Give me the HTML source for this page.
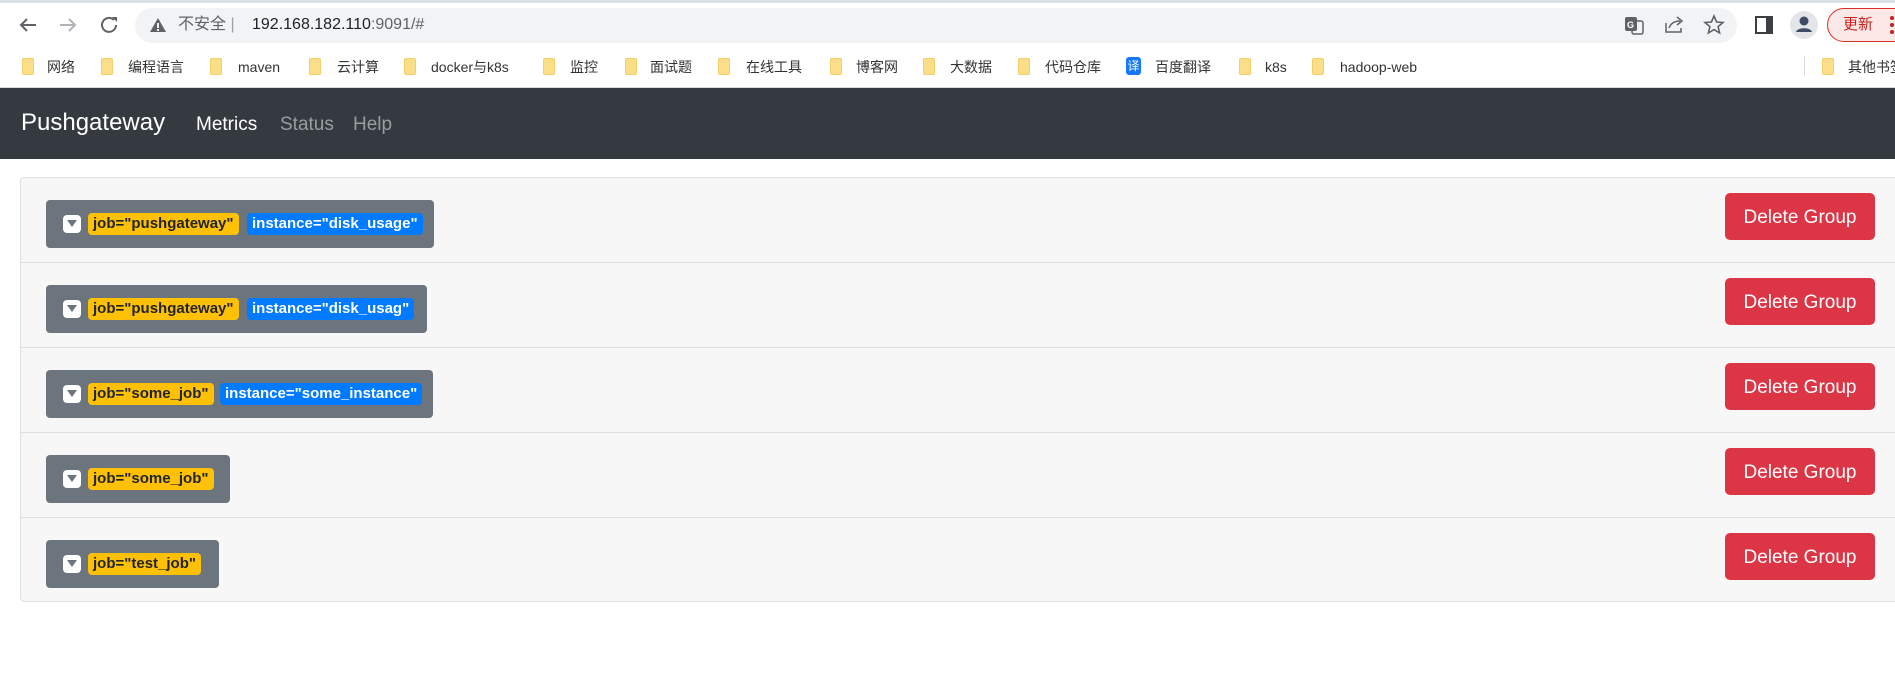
<!DOCTYPE html>
<html><head><meta charset="utf-8"><style>
*{margin:0;padding:0;box-sizing:border-box}
body{width:1895px;height:691px;overflow:hidden;background:#fff;font-family:"Liberation Sans","Noto Sans CJK SC",sans-serif;position:relative}
.abs{position:absolute}
.top{left:0;top:0;width:1895px;height:3px;background:#dee1e6}
.addr{left:135px;top:8px;width:1602px;height:35px;border-radius:18px;background:#f1f3f4}
.bm{position:absolute;top:58px;font-size:14px;color:#333;line-height:18px;white-space:nowrap}
.fd{position:absolute;top:58px;width:12px;height:17px;background:#fbdf88;border:1px solid #f2cf6a;border-radius:2px}
.nav{left:0;top:88px;width:1895px;height:71px;background:#343a40}
.card{left:20px;top:177px;width:1890px;height:425px;background:#f7f7f7;border:1px solid #dfdfdf;border-radius:4px}
.row{position:absolute;left:0;width:100%;height:85px;border-bottom:1px solid #dfdfdf}
.grp{position:absolute;left:25px;top:22px;height:48px;background:#6c757d;border-radius:4px}
.ic{position:absolute;left:17px;top:15px;width:18px;height:18px;background:#fff;border-radius:4px}
.ic:after{content:"";position:absolute;left:4px;top:5px;border-left:5px solid transparent;border-right:5px solid transparent;border-top:7px solid #6c757d}
.b{position:absolute;top:13px;height:22px;line-height:22px;border-radius:4px;padding:0 5px;font-weight:bold;font-size:15px;white-space:nowrap}
.y{background:#ffc107;color:#212529}
.bl{background:#007bff;color:#fff}
.del{position:absolute;left:1704px;top:15px;width:150px;height:47px;background:#dc3545;color:#fff;border-radius:5px;font-size:19px;line-height:50px;text-align:center}
</style></head><body>
<div class="abs top"></div>
<svg class="abs" style="left:17px;top:14px" width="110" height="22" viewBox="0 0 110 22">
<path d="M19 11H4M10 5l-6 6 6 6" stroke="#5f6368" stroke-width="2" fill="none"/>
<path d="M43 11h15M52 5l6 6-6 6" stroke="#b0b3b7" stroke-width="2" fill="none"/>
<path d="M97 6a7 7 0 1 0 2 5" stroke="#5f6368" stroke-width="2" fill="none"/><path d="M95 3h5v5z" fill="#5f6368"/>
</svg>
<div class="abs addr"></div>
<svg class="abs" style="left:150px;top:18px" width="16" height="14"><path d="M8 0L16 14H0z" fill="#5f6368"/><rect x="7" y="5" width="2" height="5" fill="#f1f3f4"/><rect x="7" y="11" width="2" height="2" fill="#f1f3f4"/></svg>
<div class="abs" style="left:178px;top:14px;font-size:16px;color:#5f6368;line-height:22px">不安全 <span style="color:#9aa0a6">|</span></div>
<div class="abs" style="left:252px;top:14px;font-size:16px;color:#202124;line-height:22px">192.168.182.110<span style="color:#5f6368">:9091/#</span></div>
<svg class="abs" style="left:1625px;top:14px" width="110" height="22">
<rect x="0" y="3" width="12" height="14" rx="2" fill="#5f6368"/><rect x="7" y="7" width="11" height="13" rx="2" fill="none" stroke="#5f6368" stroke-width="1.5"/><text x="2" y="14" font-size="9" fill="#fff" font-family="Liberation Sans" font-weight="bold">G</text>
<path d="M41 9v9h15v-4M44 14c2-5 6-7 11-7M52 3l5 4-5 4" stroke="#5f6368" stroke-width="1.5" fill="none"/>
<path d="M89 2l2.6 6 6.4.5-4.9 4.2 1.5 6.3-5.6-3.4-5.6 3.4 1.5-6.3L80 8.5l6.4-.5z" stroke="#5f6368" stroke-width="1.6" fill="none"/>
</svg>
<svg class="abs" style="left:1755px;top:16px" width="18" height="18"><rect x="1" y="1" width="16" height="16" fill="none" stroke="#3c4043" stroke-width="2"/><rect x="11" y="1" width="6" height="16" fill="#3c4043"/></svg>
<svg class="abs" style="left:1790px;top:11px" width="28" height="28"><circle cx="14" cy="14" r="14" fill="#e3e5e8"/><circle cx="14" cy="10" r="4.5" fill="#3c4d64"/><path d="M6 21c1-5 15-5 16 0z" fill="#3c4d64"/></svg>
<div class="abs" style="left:1827px;top:8px;width:90px;height:34px;border:1.5px solid #d93025;border-radius:17px;background:#fce8e6"></div>
<div class="abs" style="left:1843px;top:14px;font-size:15px;color:#c5221f;line-height:22px">更新</div>
<svg class="abs" style="left:1889px;top:14px" width="6" height="22"><circle cx="3" cy="4" r="2" fill="#c5221f"/><circle cx="3" cy="11" r="2" fill="#c5221f"/><circle cx="3" cy="18" r="2" fill="#c5221f"/></svg>

<div class="fd" style="left:22px"></div><div class="bm" style="left:47px">网络</div>
<div class="fd" style="left:101px"></div><div class="bm" style="left:128px">编程语言</div>
<div class="fd" style="left:210px"></div><div class="bm" style="left:238px">maven</div>
<div class="fd" style="left:309px"></div><div class="bm" style="left:337px">云计算</div>
<div class="fd" style="left:404px"></div><div class="bm" style="left:431px">docker与k8s</div>
<div class="fd" style="left:543px"></div><div class="bm" style="left:570px">监控</div>
<div class="fd" style="left:625px"></div><div class="bm" style="left:650px">面试题</div>
<div class="fd" style="left:718px"></div><div class="bm" style="left:746px">在线工具</div>
<div class="fd" style="left:830px"></div><div class="bm" style="left:856px">博客网</div>
<div class="fd" style="left:923px"></div><div class="bm" style="left:950px">大数据</div>
<div class="fd" style="left:1018px"></div><div class="bm" style="left:1045px">代码仓库</div>
<div class="abs" style="left:1126px;top:57px;width:15px;height:18px;background:#1677ff;border-radius:3px;color:#fff;font-size:12px;line-height:18px;text-align:center">译</div><div class="bm" style="left:1155px">百度翻译</div>
<div class="fd" style="left:1239px"></div><div class="bm" style="left:1265px">k8s</div>
<div class="fd" style="left:1312px"></div><div class="bm" style="left:1340px">hadoop-web</div>
<div class="abs" style="left:1804px;top:56px;width:1px;height:20px;background:#dadce0"></div>
<div class="fd" style="left:1822px"></div><div class="bm" style="left:1848px">其他书签</div>
<div class="abs" style="left:0;top:87px;width:1895px;height:1px;background:#dadce0"></div>

<div class="abs nav"></div>
<div class="abs" style="left:21px;top:109px;font-size:24px;color:#fff;line-height:28px">Pushgateway</div>
<div class="abs" style="left:196px;top:113px;font-size:19px;color:#fff;line-height:24px">Metrics</div>
<div class="abs" style="left:280px;top:113px;font-size:19px;color:#9a9da0;line-height:24px">Status</div>
<div class="abs" style="left:353px;top:113px;font-size:19px;color:#9a9da0;line-height:24px">Help</div>

<div class="abs card">
<div class="row" style="top:0"><div class="grp" style="width:388px"><div class="ic"></div><div class="b y" style="left:42px">job="pushgateway"</div><div class="b bl" style="left:201px">instance="disk_usage"</div></div><div class="del">Delete Group</div></div>
<div class="row" style="top:85px"><div class="grp" style="width:381px"><div class="ic"></div><div class="b y" style="left:42px">job="pushgateway"</div><div class="b bl" style="left:201px">instance="disk_usag"</div></div><div class="del">Delete Group</div></div>
<div class="row" style="top:170px"><div class="grp" style="width:387px"><div class="ic"></div><div class="b y" style="left:42px">job="some_job"</div><div class="b bl" style="left:174px">instance="some_instance"</div></div><div class="del">Delete Group</div></div>
<div class="row" style="top:255px"><div class="grp" style="width:184px"><div class="ic"></div><div class="b y" style="left:42px">job="some_job"</div></div><div class="del">Delete Group</div></div>
<div class="row" style="top:340px;border-bottom:none"><div class="grp" style="width:173px"><div class="ic"></div><div class="b y" style="left:42px">job="test_job"</div></div><div class="del">Delete Group</div></div>
</div>
</body></html>
